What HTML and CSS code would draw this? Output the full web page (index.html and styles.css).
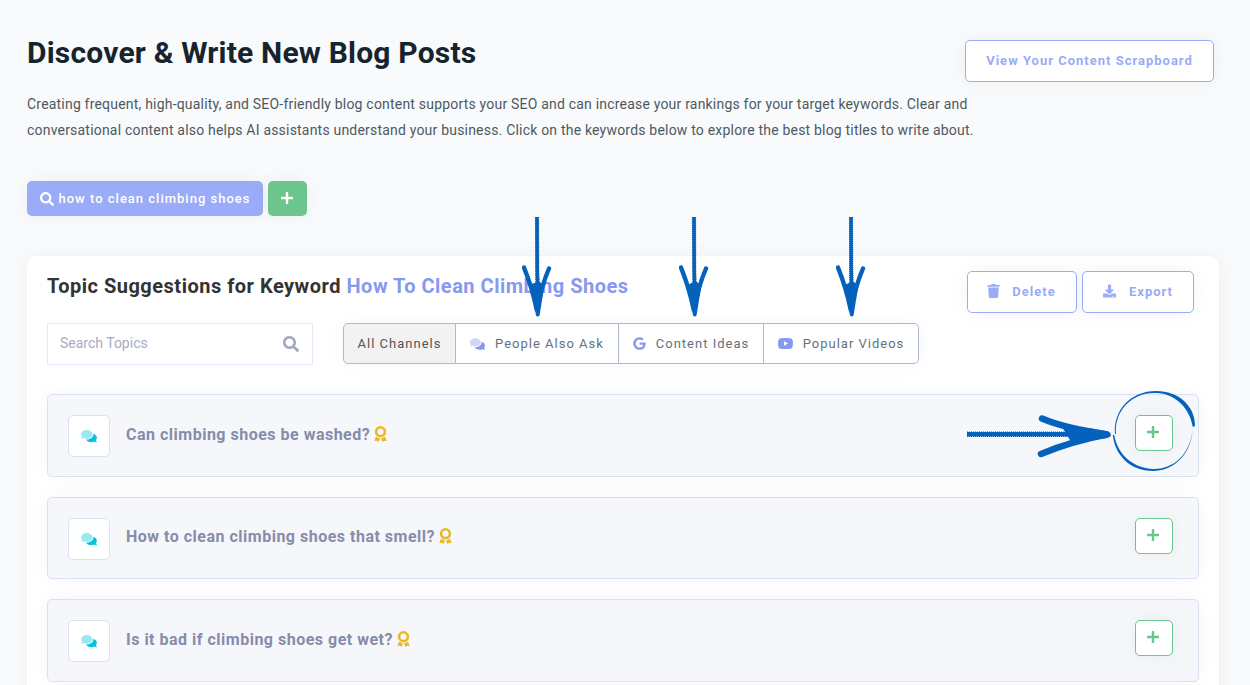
FILE: index.html
```html
<!DOCTYPE html>
<html lang="en">
<head>
  <meta charset="UTF-8" />
  <meta name="viewport" content="width=device-width, initial-scale=1.0" />
  <title>Discover &amp; Write New Blog Posts</title>
  <link rel="stylesheet" href="styles.css">
</head>
<body>
  <!-- Shared icons -->
  <svg class="sprite" xmlns="http://www.w3.org/2000/svg">
    <symbol id="search" viewBox="0 0 512 512"><path d="M505 442.7L405.3 343c-4.5-4.5-10.6-7-17-7H372c27.6-35.3 44-79.7 44-128C416 93.1 322.9 0 208 0S0 93.1 0 208s93.1 208 208 208c48.3 0 92.7-16.4 128-44v16.3c0 6.4 2.5 12.5 7 17l99.7 99.7c9.4 9.4 24.6 9.4 33.9 0l28.3-28.3c9.4-9.4 9.4-24.6.1-34zM208 336c-70.7 0-128-57.2-128-128 0-70.7 57.2-128 128-128 70.7 0 128 57.2 128 128 0 70.7-57.2 128-128 128z"/></symbol>
    <symbol id="plus" viewBox="0 0 12 12"><path d="M5.300 0h1.400q.5 0 .5.500v4.300h4.300q.5 0 .5.500v1.400q0 .5-.5.500H7.200v4.300q0 .5-.5.500H5.300q-.5 0-.5-.5V7.200H.5q-.5 0-.5-.5V5.300q0-.5.5-.5h4.300V.5q0-.5.5-.5z"/></symbol>
    <symbol id="trash" viewBox="0 0 448 512"><path d="M432 32H312l-9.400-18.700A24 24 0 0 0 281.100 0H166.800a23.720 23.720 0 0 0-21.400 13.300L136 32H16A16 16 0 0 0 0 48v32a16 16 0 0 0 16 16h416a16 16 0 0 0 16-16V48a16 16 0 0 0-16-16zM32 128l21.200 339a48 48 0 0 0 47.900 45h245.800a48 48 0 0 0 47.900-45L416 128z"/></symbol>
    <symbol id="download" viewBox="0 0 512 512"><path d="M216 0h80c13.300 0 24 10.700 24 24v168h87.700c17.800 0 26.700 21.500 14.100 34.100L269.700 378.300c-7.500 7.500-19.800 7.500-27.300 0L90.100 226.100c-12.600-12.600-3.700-34.100 14.100-34.100H192V24c0-13.300 10.700-24 24-24zm296 376v112c0 13.300-10.700 24-24 24H24c-13.300 0-24-10.700-24-24V376c0-13.300 10.700-24 24-24h146.700l49 49c20.100 20.100 52.500 20.100 72.600 0l49-49H488c13.300 0 24 10.700 24 24zm-124 88c0-11-9-20-20-20s-20 9-20 20 9 20 20 20 20-9 20-20zm64 0c0-11-9-20-20-20s-20 9-20 20 9 20 20 20 20-9 20-20z"/></symbol>
    <symbol id="comments" viewBox="0 0 576 512"><path opacity=".4" d="M416 192c0-88.400-93.100-160-208-160S0 103.600 0 192c0 34.300 14.100 65.900 38 92-13.400 30.200-35.500 54.200-35.800 54.500-2.200 2.300-2.800 5.700-1.500 8.700S4.800 352 8 352c36.600 0 66.900-12.300 88.700-25 32.200 15.700 70.300 25 111.300 25 114.900 0 208-71.600 208-160z"/><path d="M538 412c23.900-26 38-57.700 38-92 0-66.900-53.500-124.200-129.300-148.100.9 6.600 1.300 13.300 1.300 20.100 0 105.900-107.700 192-240 192-10.800 0-21.300-.8-31.700-1.900C207.800 439.600 281.800 480 368 480c41 0 79.100-9.200 111.300-25 21.800 12.700 52.100 25 88.700 25 3.200 0 6.100-1.900 7.300-4.800 1.300-2.900.7-6.300-1.500-8.700-.3-.3-22.400-24.200-35.800-54.500z"/></symbol>
    <symbol id="google" viewBox="0 0 488 512"><path d="M488 261.800C488 403.300 391.100 504 248 504 110.800 504 0 393.200 0 256S110.800 8 248 8c66.800 0 123 24.500 166.300 64.900l-67.500 64.900C258.500 52.600 94.300 116.600 94.300 256c0 86.500 69.100 156.600 153.700 156.600 98.200 0 135-70.400 140.800-106.900H248v-85.300h236.100c2.300 12.700 3.900 24.900 3.900 41.400z"/></symbol>
    <symbol id="youtube" viewBox="0 0 15 11"><path fill-rule="evenodd" d="M2.500.3Q7.500-.3 12.500.3 14.500.5 14.700 2.500 15.100 5.500 14.700 8.500 14.500 10.500 12.500 10.700 7.500 11.300 2.500 10.700.5 10.500.3 8.500-.1 5.500.3 2.500.5.500 2.500.3zM6 3.300v4.400l4-2.200z"/></symbol>
    <symbol id="award" viewBox="0 0 13 16"><circle cx="6.500" cy="5.700" r="4.400" fill="none" stroke="currentColor" stroke-width="2.600"/><path d="M2 10.800l4 1.700-1.500 3.500-1.700-1.200-2.500.2zM11 10.800l-4 1.700 1.500 3.500 1.700-1.200 2.500.2z"/></symbol>
    <symbol id="arrow" viewBox="0 0 30 102"><path d="M15 2L15.200 55 16 92" fill="none" stroke="currentColor" stroke-width="3.600"/><path d="M15 2L15.200 55 16 92" fill="none" stroke="currentColor" stroke-width="4.200" stroke-dasharray="1 1"/><path d="M2 52.500Q10 72 15 96 19 72 27 53.500" fill="none" stroke="currentColor" stroke-width="4.400" stroke-linecap="round"/><path d="M9 70L14 100.500Q16 102.500 17.500 100.500L22.500 70 16 66z"/></symbol>
  </svg>

  <header class="page-header">
    <div class="intro">
      <h1>Discover &amp; Write New Blog Posts</h1>
      <p>Creating frequent, high-quality, and SEO-friendly blog content supports your SEO and can increase your rankings for your target keywords. Clear and<br>conversational content also helps AI assistants understand your business. Click on the keywords below to explore the best blog titles to write about.</p>
    </div>
    <button class="btn btn-scrapboard">View Your Content Scrapboard</button>
  </header>

  <div class="keywords">
    <button class="keyword"><svg class="icon"><use href="#search"/></svg><span>how to clean climbing shoes</span></button>
    <button class="keyword-add"><svg class="icon"><use href="#plus"/></svg></button>
  </div>

  <main class="panel">
    <div class="panel-header">
      <h2>Topic Suggestions for Keyword <span>How To Clean Climbing Shoes</span></h2>
      <div class="actions">
        <button class="btn btn-delete"><svg class="icon icon-trash"><use href="#trash"/></svg><span>Delete</span></button>
        <button class="btn btn-export"><svg class="icon"><use href="#download"/></svg><span>Export</span></button>
      </div>
    </div>

    <div class="filters">
      <div class="search-box">
        <input type="text" placeholder="Search Topics">
        <svg class="icon"><use href="#search"/></svg>
      </div>
      <div class="channels">
        <button class="channel active">All Channels</button>
        <button class="channel people"><svg class="icon"><use href="#comments"/></svg><span>People Also Ask</span></button>
        <button class="channel ideas"><svg class="icon"><use href="#google"/></svg><span>Content Ideas</span></button>
        <button class="channel videos"><svg class="icon"><use href="#youtube"/></svg><span>Popular Videos</span></button>
      </div>
    </div>

    <div class="topic-list">
      <div class="topic">
        <div class="topic-icon"><svg class="icon"><use href="#comments"/></svg></div>
        <h3>Can climbing shoes be washed?</h3>
        <svg class="award"><use href="#award"/></svg>
        <button class="topic-add"><svg class="icon"><use href="#plus"/></svg></button>
      </div>
      <div class="topic">
        <div class="topic-icon"><svg class="icon"><use href="#comments"/></svg></div>
        <h3>How to clean climbing shoes that smell?</h3>
        <svg class="award"><use href="#award"/></svg>
        <button class="topic-add"><svg class="icon"><use href="#plus"/></svg></button>
      </div>
      <div class="topic">
        <div class="topic-icon"><svg class="icon"><use href="#comments"/></svg></div>
        <h3>Is it bad if climbing shoes get wet?</h3>
        <svg class="award"><use href="#award"/></svg>
        <button class="topic-add"><svg class="icon"><use href="#plus"/></svg></button>
      </div>
    </div>
  </main>

  <!-- Hand-drawn pointers on top of the page -->
  <svg class="pointers" viewBox="0 0 1250 685">
    <use href="#arrow" x="522" y="215" width="30" height="102"/>
    <use href="#arrow" x="679" y="215" width="30" height="102"/>
    <use href="#arrow" x="836" y="215" width="30" height="102"/>
    <g fill="none" stroke="currentColor">
      <path d="M967 434.300H1085" stroke-width="4.500"/>
      <path d="M967 434.300H1085" stroke-width="5.400" stroke-dasharray="1 1"/>
      <path d="M1042 418.500Q1064 428 1107 434.500 1072 441 1041 454" stroke-width="6.500" stroke-linecap="round" stroke-linejoin="round"/>
    </g>
    <path d="M1062 427Q1078 426 1100 430 1111 431 1111 435 1111 438 1100 439 1076 443 1070 440z"/>
    <path d="M1115 434C1113 410 1131 391 1156 391 1179 391 1195 406 1195 426L1192.800 427C1190 409 1176 393.500 1156 393 1132 392 1114 411 1116 434zM1112.800 435C1115 456 1131 471 1153 471 1172 471 1191 456 1192.500 430 1190 456 1172 469.500 1153 469 1134 468 1118 456 1114.200 435z"/>
  </svg>
</body>
</html>
```

FILE: styles.css
```css
* {
  box-sizing: border-box;
}
body {
  position: relative;
  height: 685px;
  margin: 0;
  padding: 32px 31px 0 27px;
  overflow: hidden;
  background: #f9fafc;
  font-family: Roboto, sans-serif;
}
h1, h2, h3, p {
  margin: 0;
}
button {
  display: flex;
  flex: none;
  align-items: center;
  justify-content: center;
  padding: 0;
  font-family: inherit;
  letter-spacing: 1px;
  border-radius: 5px;
  cursor: pointer;
  box-shadow: 0 0 20px rgba(0, 0, 0, 0.05);
}
.sprite {
  position: absolute;
  width: 0;
  height: 0;
}
.icon, .award {
  display: block;
  flex: none;
  fill: currentColor;
}
.page-header {
  display: flex;
  justify-content: space-between;
  height: 149px;
  padding-right: 5px;
}
.intro {
  width: 0;
}
h1 {
  font-size: 30px;
  font-weight: 700;
  line-height: 41px;
  letter-spacing: 0.2px;
  white-space: nowrap;
  color: #15242d;
}
.intro p {
  margin-top: 18px;
  font-size: 14px;
  line-height: 26px;
  letter-spacing: 0.2px;
  white-space: nowrap;
  color: #4d5960;
}
.btn {
  height: 42px;
  padding-bottom: 2px;
  font-size: 13px;
  font-weight: 700;
  color: #9aabf7;
  background: #fff;
  border: 1px solid #9aabf7;
}
.btn-scrapboard {
  width: 249px;
  margin-top: 8px;
}
.keywords {
  display: flex;
  gap: 5px;
  height: 35px;
}
.keyword {
  gap: 5px;
  width: 236px;
  font-size: 13px;
  font-weight: 500;
  color: #fff;
  background: #9aabf7;
  border: none;
}
.keyword .icon {
  width: 14px;
  height: 14px;
}
.keyword-add {
  width: 39px;
  padding: 0 1px 1px 0;
  color: #fff;
  background: #6cc58c;
  border: none;
}
.keyword-add .icon {
  width: 12px;
  height: 12px;
}
.panel {
  height: 460px;
  margin-top: 40px;
  padding: 15px 20px;
  background: #fff;
  border-radius: 10px;
  box-shadow: 0 0 20px rgba(0, 0, 0, 0.05);
}
.panel-header {
  display: flex;
  justify-content: space-between;
  padding-right: 5px;
}
h2 {
  font-size: 20px;
  font-weight: 700;
  line-height: 30px;
  letter-spacing: 0.5px;
  color: #333;
}
h2 span {
  color: #8799ed;
}
.actions {
  display: flex;
  gap: 5px;
}
.btn-delete {
  gap: 12px;
  width: 110px;
  padding-right: 1px;
}
.btn-export {
  gap: 13px;
  width: 112px;
}
.btn .icon {
  width: 13px;
  height: 14px;
}
.filters {
  display: flex;
  gap: 30px;
  margin-top: 10px;
}
.search-box {
  display: flex;
  align-items: center;
  width: 266px;
  height: 42px;
  padding: 0 13px 0 12px;
  border: 1px solid #e2e8f5;
}
.search-box input {
  flex: 1;
  min-width: 0;
  padding: 0 0 2px;
  font: 14px Roboto, sans-serif;
  border: none;
  outline: none;
}
.search-box input::placeholder {
  color: #a7abc3;
}
.search-box .icon {
  width: 16px;
  height: 16px;
  color: #a2a7bf;
}
.channels {
  display: flex;
  height: 41px;
  border-radius: 4px;
  box-shadow: 0 0 20px rgba(0, 0, 0, 0.04);
}
.channel {
  width: 113px;
  font-size: 13px;
  font-weight: 400;
  color: #65727c;
  background: #fff;
  border: 1px solid #adb9cf;
  border-left: none;
  border-radius: 0;
  box-shadow: none;
}
.channel .icon {
  color: #8799ed;
}
.channel.active {
  color: #555;
  background: #f2f2f2;
  border-left: 1px solid #adb9cf;
  border-radius: 5px 0 0 5px;
}
.people {
  gap: 10px;
  width: 163px;
}
.people .icon {
  width: 15px;
  height: 14px;
}
.ideas {
  gap: 10px;
  width: 145px;
}
.ideas .icon {
  width: 13px;
  height: 13px;
}
.videos {
  gap: 10px;
  width: 155px;
  border-radius: 0 5px 5px 0;
}
.videos .icon {
  width: 15px;
  height: 11px;
}
.topic-list {
  display: flex;
  flex-direction: column;
  gap: 20px;
  margin-top: 29.400px;
}
.topic {
  display: flex;
  flex: none;
  align-items: flex-start;
  height: 82.500px;
  padding: 20px 25px 0 20px;
  background: #f5f7fb;
  border: 1px solid #d9e2f1;
  border-radius: 5px;
  box-shadow: 0 0 20px rgba(0, 0, 0, 0.04);
}
.topic-icon {
  display: flex;
  align-items: center;
  justify-content: center;
  width: 42px;
  height: 42px;
  background: #fff;
  border: 1px solid #d9e2f1;
  border-radius: 5px;
}
.topic-icon .icon {
  width: 16px;
  height: 14px;
  color: #00c5df;
}
h3 {
  margin: 0.300px 0 0 16px;
  font-size: 16px;
  font-weight: 700;
  line-height: 38px;
  letter-spacing: 0.5px;
  color: #878ca9;
}
.award {
  width: 13px;
  height: 16px;
  margin: 10.500px 0 0 4px;
  color: #e9b827;
}
.topic-add {
  width: 38px;
  height: 36px;
  padding: 0 2px 2px 0;
  margin-left: auto;
  color: #6cc58c;
  background: #fff;
  border: 1px solid #6cc58c;
}
.topic-add .icon {
  width: 12px;
  height: 12px;
}
.pointers {
  position: absolute;
  top: 0;
  left: 0;
  width: 1250px;
  height: 685px;
  fill: currentColor;
  color: #0562bc;
  pointer-events: none;
}
```
